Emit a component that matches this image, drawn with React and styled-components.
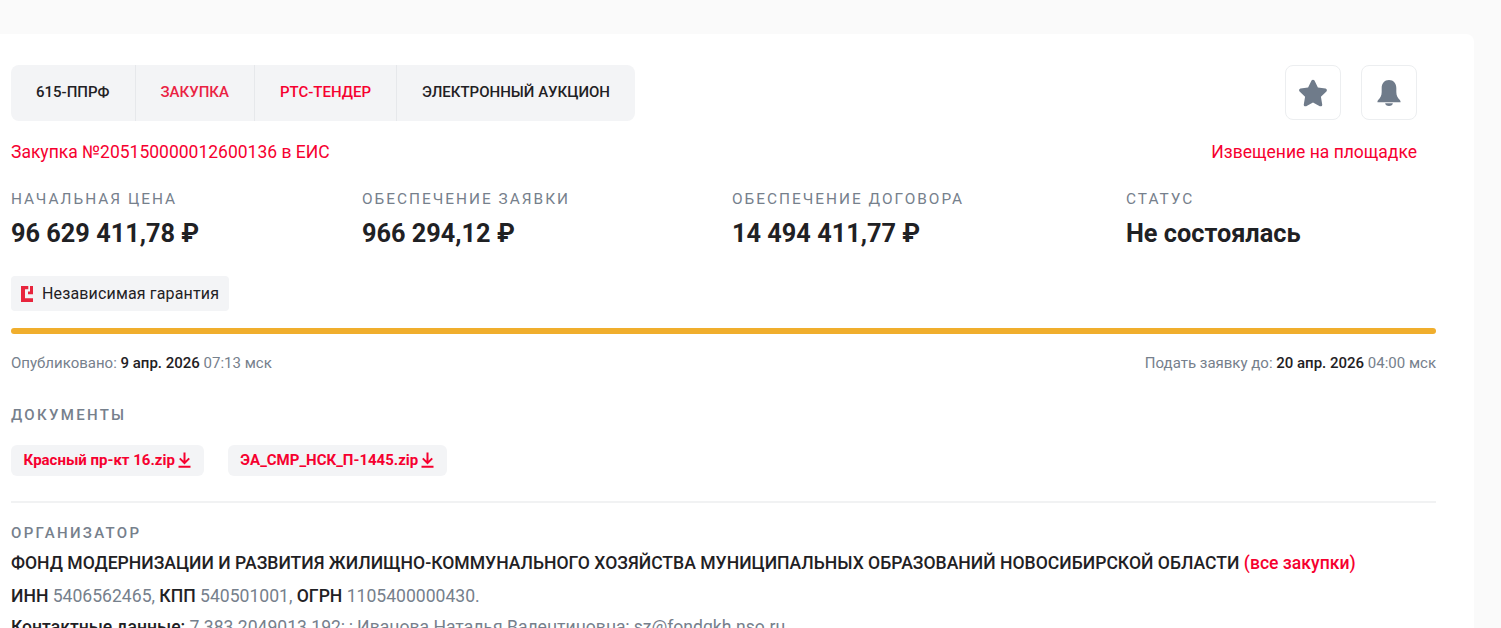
import React from "react";
import styled, { createGlobalStyle } from "styled-components";
import { FaStar } from "react-icons/fa";

const GlobalStyle = createGlobalStyle`
  html, body {
    margin: 0;
    height: 100%;
    overflow: hidden;
    background: #fafafa;
    font-family: Roboto, "Liberation Sans", sans-serif;
    color: #1f2124;
  }
`;

const RED = "#f6002f";
const GRAY = "#76808c";

const Page = styled.div`
  height: 628px;
  overflow: hidden;
  padding-top: 34px;
  box-sizing: border-box;
`;

const Card = styled.div`
  width: 1474px;
  box-sizing: border-box;
  background: #fff;
  border-radius: 0 8px 0 0;
  padding: 31px 38px 0 11px;
`;

const TopRow = styled.div`
  display: flex;
  justify-content: space-between;
  padding-right: 19px;
`;

const Tabs = styled.div`
  display: flex;
  height: 56px;
  background: #f3f4f6;
  border-radius: 8px;
`;

const Tab = styled.div`
  display: flex;
  align-items: center;
  box-sizing: border-box;
  padding: 0 25px 2px;
  font-size: 15px;
  font-weight: 500;
  color: ${(p) => p.$color || "#1f2124"};
  & + & {
    border-left: 1px solid #e6e8eb;
  }
`;

const Actions = styled.div`
  display: flex;
  gap: 20px;
`;

const IconButton = styled.div`
  width: 56px;
  height: 55px;
  box-sizing: border-box;
  border: 1px solid #eceef0;
  border-radius: 8px;
  display: flex;
  align-items: center;
  justify-content: center;
  color: #6f7b8a;
  font-size: 30px;
`;

const LinkRow = styled.div`
  display: flex;
  justify-content: space-between;
  padding-right: 19px;
  margin-top: 21px;
  font-size: 17.5px;
  line-height: 20px;
  color: ${RED};
`;

const Stats = styled.div`
  display: grid;
  grid-template-columns: 351px 370px 394px 1fr;
  margin-top: 27px;
`;

const StatLabel = styled.div`
  font-size: 15.4px;
  line-height: 20px;
  letter-spacing: 2px;
  color: ${GRAY};
`;

const StatValue = styled.div`
  margin-top: 9px;
  font-size: 25.3px;
  line-height: 32px;
  font-weight: 700;
`;

const Chip = styled.div`
  display: inline-flex;
  align-items: center;
  gap: 9px;
  height: 35px;
  margin-top: 26px;
  padding: 0 10px;
  background: #f3f4f6;
  border-radius: 4px;
  font-size: 16px;
  letter-spacing: 0.15px;
`;

const Bar = styled.div`
  height: 6px;
  margin-top: 17px;
  background: #f0ae2d;
  border-radius: 3px;
`;

const DatesRow = styled.div`
  display: flex;
  justify-content: space-between;
  margin-top: 19px;
  font-size: 15px;
  line-height: 20px;
  color: ${GRAY};
  b {
    font-weight: 500;
    color: #1f2124;
  }
`;

const SectionLabel = styled.div`
  font-size: 15px;
  line-height: 20px;
  font-weight: 500;
  letter-spacing: 2.3px;
  color: ${GRAY};
  margin-top: ${(p) => p.$top}px;
`;

const Docs = styled.div`
  display: flex;
  gap: 24px;
  margin-top: 20px;
`;

const Doc = styled.div`
  display: flex;
  align-items: center;
  box-sizing: border-box;
  gap: 3px;
  height: 31px;
  padding: 0 13px 1px 12.5px;
  background: #f3f4f6;
  border-radius: 6px;
  font-size: 15px;
  font-weight: 700;
  color: ${RED};
`;

const Divider = styled.div`
  height: 2px;
  margin-top: 25px;
  background: #f1f2f3;
`;

const Line = styled.div`
  font-size: 17.58px;
  line-height: 24px;
  margin-top: ${(p) => p.$top || 0}px;
  color: ${GRAY};
  white-space: nowrap;
  b {
    font-weight: 500;
    color: #1f2124;
  }
  span {
    font-weight: 500;
    color: ${RED};
  }
`;

const DownloadIcon = () => (
  <svg width="13" height="16" viewBox="0 0 13 16" fill="none" stroke="currentColor" strokeWidth="2">
    <path d="M6.5 0.5v10M1.8 6.4l4.7 4.7 4.7-4.7M0.5 14.8h12" />
  </svg>
);

const GuaranteeIcon = () => (
  <svg width="12" height="16" viewBox="0 0 12 16" fill="#e8253d">
    <path d="M0 0h7.3v3.2H4v9.1h8V16H0z" />
    <path d="M9 0h3v8.2H7V5.6h2z" />
  </svg>
);

const BellIcon = () => (
  <svg width="24" height="26" viewBox="0 0 24 27" fill="currentColor">
    <path d="M12 0c-4.6 0-7.6 3.6-7.6 8.2v4.3c0 3.6-1.4 6.2-3.4 7.9-.6.5-1 1.2-1 2.6h24c0-1.4-.4-2.1-1-2.6-2-1.7-3.4-4.3-3.4-7.9V8.2C19.6 3.6 16.6 0 12 0z" />
    <path d="M8 24.2h8c0 1.6-1.8 2.8-4 2.8s-4-1.2-4-2.8z" />
  </svg>
);

const stats = [
  { label: "НАЧАЛЬНАЯ ЦЕНА", value: "96 629 411,78 ₽" },
  { label: "ОБЕСПЕЧЕНИЕ ЗАЯВКИ", value: "966 294,12 ₽" },
  { label: "ОБЕСПЕЧЕНИЕ ДОГОВОРА", value: "14 494 411,77 ₽" },
  { label: "СТАТУС", value: "Не состоялась" },
];

export default function App() {
  return (
    <Page>
      <GlobalStyle />
      <Card>
        <TopRow>
          <Tabs>
            <Tab>615-ППРФ</Tab>
            <Tab $color="#ea2343">ЗАКУПКА</Tab>
            <Tab $color={RED}>РТС-ТЕНДЕР</Tab>
            <Tab>ЭЛЕКТРОННЫЙ АУКЦИОН</Tab>
          </Tabs>
          <Actions>
            <IconButton>
              <FaStar />
            </IconButton>
            <IconButton>
              <BellIcon />
            </IconButton>
          </Actions>
        </TopRow>
        <LinkRow>
          <div>Закупка №205150000012600136 в ЕИС</div>
          <div>Извещение на площадке</div>
        </LinkRow>
        <Stats>
          {stats.map((s) => (
            <div key={s.label}>
              <StatLabel>{s.label}</StatLabel>
              <StatValue>{s.value}</StatValue>
            </div>
          ))}
        </Stats>
        <Chip>
          <GuaranteeIcon />
          Независимая гарантия
        </Chip>
        <Bar />
        <DatesRow>
          <div>
            Опубликовано: <b>9 апр. 2026</b> 07:13 мск
          </div>
          <div>
            Подать заявку до: <b>20 апр. 2026</b> 04:00 мск
          </div>
        </DatesRow>
        <SectionLabel $top={32}>ДОКУМЕНТЫ</SectionLabel>
        <Docs>
          <Doc>
            Красный пр-кт 16.zip <DownloadIcon />
          </Doc>
          <Doc>
            ЭА_СМР_НСК_П-1445.zip <DownloadIcon />
          </Doc>
        </Docs>
        <Divider />
        <SectionLabel $top={20}>ОРГАНИЗАТОР</SectionLabel>
        <Line $top={8}>
          <b>
            ФОНД МОДЕРНИЗАЦИИ И РАЗВИТИЯ ЖИЛИЩНО-КОММУНАЛЬНОГО ХОЗЯЙСТВА МУНИЦИПАЛЬНЫХ ОБРАЗОВАНИЙ НОВОСИБИРСКОЙ ОБЛАСТИ
          </b>{" "}
          <span>(все закупки)</span>
        </Line>
        <Line $top={9}>
          <b>ИНН</b> 5406562465, <b>КПП</b> 540501001, <b>ОГРН</b> 1105400000430.
        </Line>
        <Line $top={7}>
          <b>Контактные данные:</b> 7 383 2049013 192; ; Иванова Наталья Валентиновна; sz@fondgkh.nso.ru
        </Line>
      </Card>
    </Page>
  );
}
